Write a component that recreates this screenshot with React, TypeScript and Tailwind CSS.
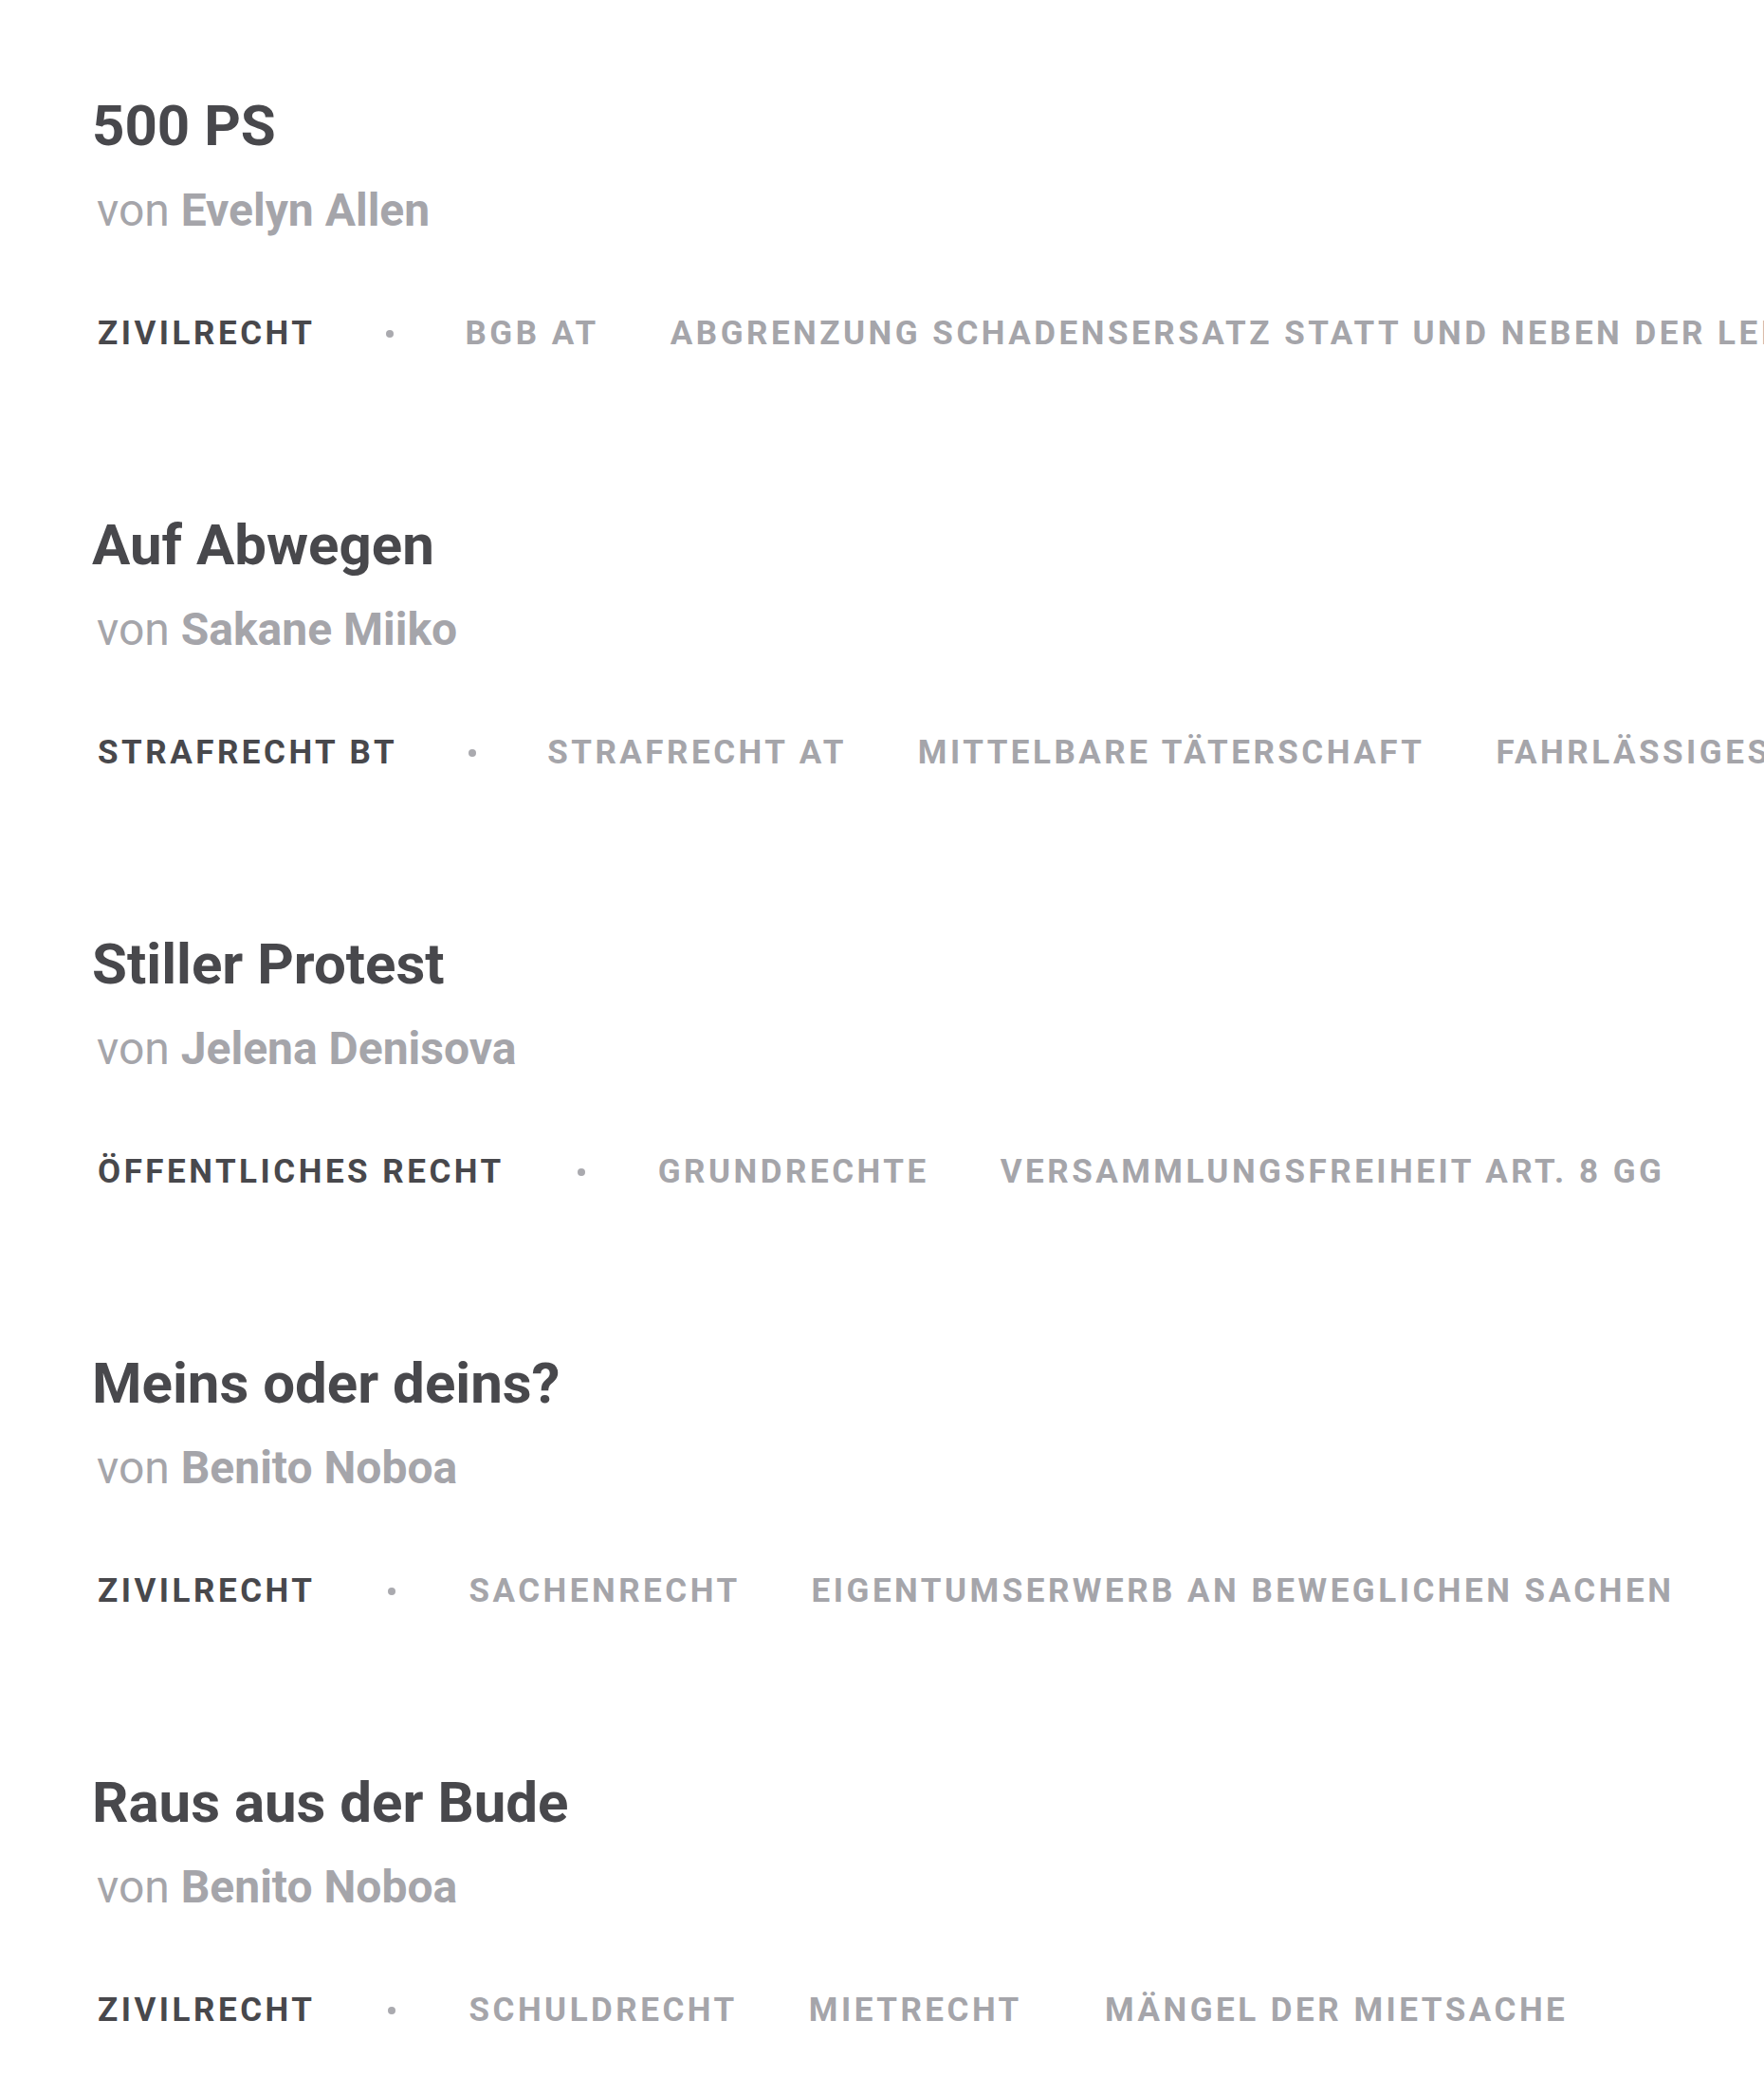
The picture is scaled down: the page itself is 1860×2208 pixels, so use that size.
const cases = [
  {
    title: "500 PS",
    author: "Evelyn Allen",
    area: "Zivilrecht",
    tags: ["BGB AT", "Abgrenzung Schadensersatz statt und neben der Leistung"],
  },
  {
    title: "Auf Abwegen",
    author: "Sakane Miiko",
    area: "Strafrecht BT",
    tags: ["Strafrecht AT", "Mittelbare Täterschaft", "Fahrlässiges Erfolgsdelikt"],
  },
  {
    title: "Stiller Protest",
    author: "Jelena Denisova",
    area: "Öffentliches Recht",
    tags: ["Grundrechte", "Versammlungsfreiheit Art. 8 GG"],
  },
  {
    title: "Meins oder deins?",
    author: "Benito Noboa",
    area: "Zivilrecht",
    tags: ["Sachenrecht", "Eigentumserwerb an beweglichen Sachen"],
  },
  {
    title: "Raus aus der Bude",
    author: "Benito Noboa",
    area: "Zivilrecht",
    // trailing space is in the source data
    tags: ["Schuldrecht", "Mietrecht\u00a0", "Mängel der Mietsache"],
  },
]

export default function App() {
  return (
    <div className="min-h-[2208px] w-[1860px] overflow-hidden bg-white font-['Roboto','Liberation_Sans',sans-serif]">
      <ul className="pt-[103px] pl-[97px]">
        {cases.map((c, i) => (
          <li key={i} className="h-[442px]">
            {/* Title */}
            <h2 className="text-[60px] font-bold leading-none text-[#48484c]">{c.title}</h2>
            {/* Author */}
            <p className="mt-[35px] pl-[5px] text-[48px] leading-none text-[#a5a5aa]">
              von <span className="font-bold">{c.author}</span>
            </p>
            {/* Tags */}
            <div className="mt-[88px] flex items-center gap-[75px] whitespace-nowrap pl-[6px] text-[35px] font-bold uppercase leading-none tracking-[0.1em]">
              <span className="text-[#48484c]">{c.area}</span>
              <span className="flex w-[12px] justify-center">
                <span className="h-[8px] w-[8px] rounded-full bg-[#aaaaaf]" />
              </span>
              {c.tags.map((t) => (
                <span key={t} className="whitespace-pre text-[#a5a5aa]">{t}</span>
              ))}
            </div>
          </li>
        ))}
      </ul>
    </div>
  )
}
